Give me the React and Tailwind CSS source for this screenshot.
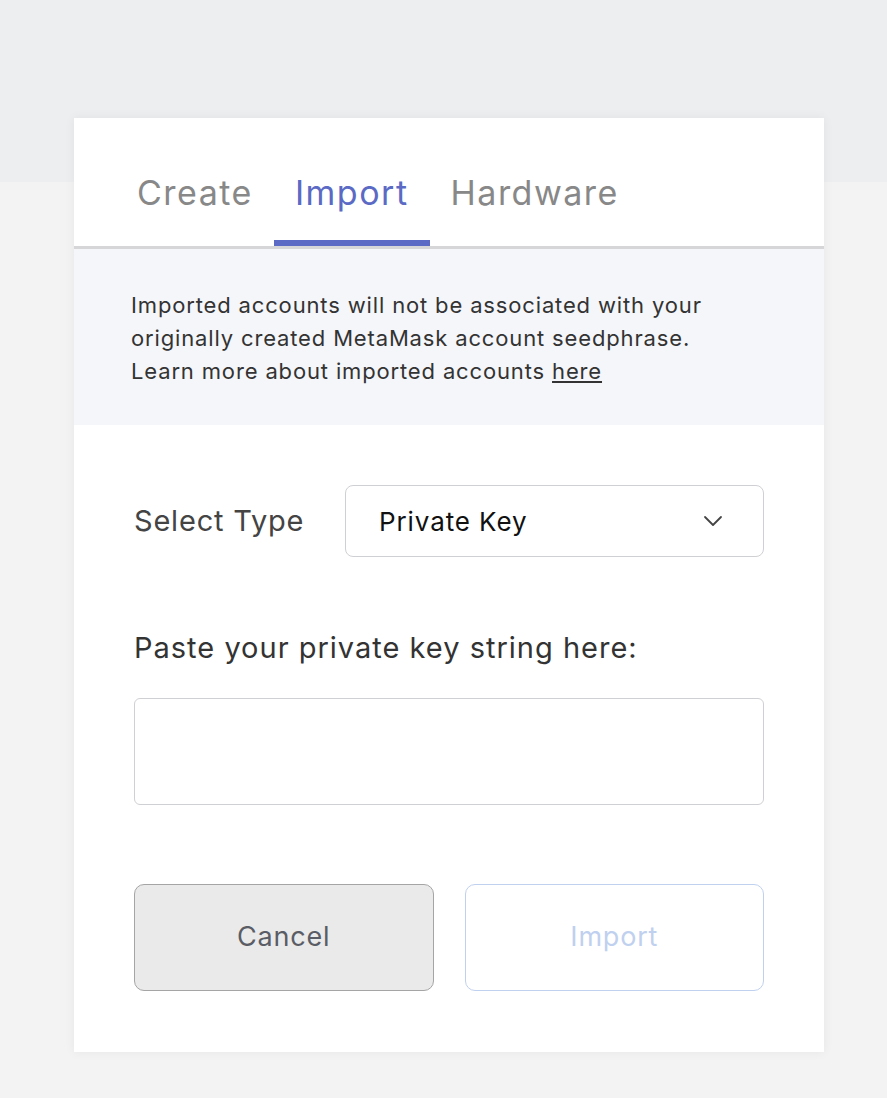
import React, { useState } from 'react';

const TABS = ['Create', 'Import', 'Hardware'];

const Chevron = () => (
  <svg width="20" height="12" viewBox="0 0 20 12" fill="none" className="text-[#444]">
    <path d="M2 2l8 8 8-8" stroke="currentColor" strokeWidth="1.8" strokeLinecap="round" strokeLinejoin="round" />
  </svg>
);

const App = () => {
  const [tab, setTab] = useState('Import');
  const [key, setKey] = useState('');

  return (
    <div className="min-h-screen bg-[#f3f3f3] font-['Inter',sans-serif]">
      {/* top band */}
      <div className="h-[182px] bg-[#edeef0]" />

      {/* card */}
      <div className="relative -mt-[64px] ml-[74px] w-[750px] h-[934px] bg-white shadow-[0_0_10px_rgba(0,0,0,0.06)]">
        {/* tabs */}
        <div className="flex items-end h-[131px] pl-[42px] border-b-[3px] border-[#d6d6d9]">
          {TABS.map(t => (
            <button
              key={t}
              onClick={() => setTab(t)}
              className={`px-[21px] pb-[27px] text-[34px] leading-[40px] tracking-[1.5px] border-b-[6px] ${
                tab === t ? 'text-[#5b6ac4] border-[#5b6ac4]' : 'text-[#888888] border-transparent'
              }`}
            >
              {t}
            </button>
          ))}
        </div>

        {/* notice */}
        <div className="bg-[#f5f6fa] px-[57px] pt-[40px] pb-[37px] text-[22px] leading-[33px] tracking-[0.85px] text-[#333]">
          Imported accounts will not be associated with your
          <br />
          originally created MetaMask account seedphrase.
          <br />
          Learn more about imported accounts <a href="#" className="underline">here</a>
        </div>

        {/* form */}
        <div className="px-[60px] pt-[60px]">
          <div className="flex items-center">
            <span className="w-[211px] text-[29px] tracking-[0.8px] text-[#444]">Select Type</span>
            <div className="flex-1 h-[72px] flex items-center justify-between pl-[33px] pr-[40px] border-[1.5px] border-[#cfd0d4] rounded-[8px] text-[26px] tracking-[0.9px] text-[#111]">
              Private Key
              <Chevron />
            </div>
          </div>

          <div className="mt-[69px] text-[29px] tracking-[1px] text-[#333]">Paste your private key string here:</div>

          <input
            value={key}
            onChange={e => setKey(e.target.value)}
            className="mt-[28px] w-full h-[107px] border-[1.5px] border-[#cfd0d4] rounded-[6px] px-4 text-[20px] outline-none"
          />

          <div className="mt-[79px] flex gap-[31px]">
            <button className="flex-1 h-[107px] bg-[#eaeaea] border-[1.5px] border-[#a5a5a5] rounded-[10px] text-[27px] tracking-[0.8px] text-[#5a5d65]">
              Cancel
            </button>
            <button disabled className="flex-1 h-[107px] bg-white border-[1.5px] border-[#bfd1ef] rounded-[10px] text-[27px] tracking-[0.8px] text-[#c0d0ef]">
              Import
            </button>
          </div>
        </div>
      </div>
    </div>
  );
};

export default App;
